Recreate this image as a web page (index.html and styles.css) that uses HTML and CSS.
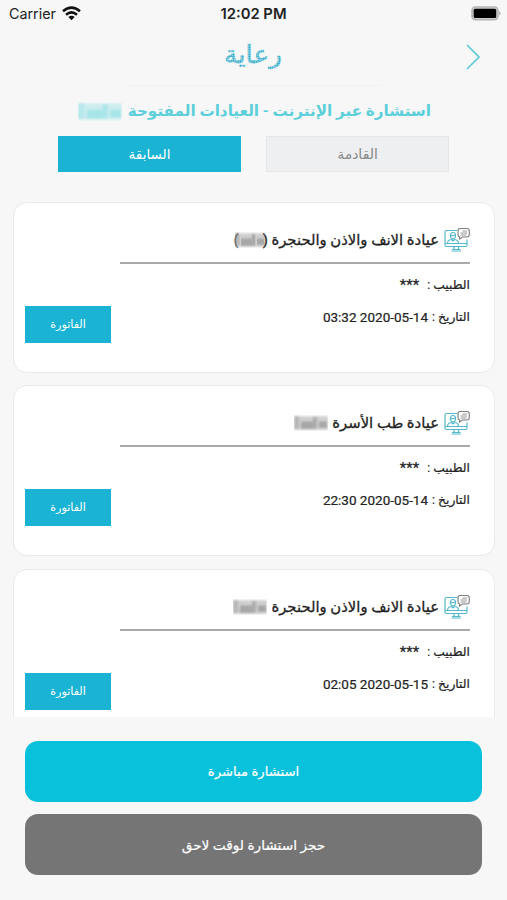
FILE: index.html
```html
<!DOCTYPE html>
<html lang="ar" dir="rtl">
<head>
    <meta charset="UTF-8">
    <meta name="viewport" content="width=device-width, initial-scale=1.0">
    <title>رعاية</title>
    <link rel="stylesheet" href="styles.css">
</head>
<body>
    <svg width="0" height="0" class="defs">
        <defs>
            <pattern id="dots" width="2.3" height="2.3" patternUnits="userSpaceOnUse">
                <circle cx="1.15" cy="1.15" r="1.1" fill="#35aecb"/>
            </pattern>
            <filter id="soft"><feGaussianBlur stdDeviation="0.8"/></filter>
            <symbol id="consult" viewBox="0 0 26 26">
                <g fill="none" stroke="#55b9cb" stroke-width="1.2">
                    <path d="M13 3.500H2.500Q1 3.500 1 5V18Q1 19.500 2.500 19.500H21.500Q23 19.500 23 18V12.500"/>
                    <path d="M1 16.500H23M10 19.500V23M14.500 19.500V23M7.500 24H17M8 22.500H16.500"/>
                    <path d="M6.500 9.500Q6 5.500 9 5.500Q12 5.500 11.500 9.500Q11 12 9 12Q7 12 6.500 9.500ZM6.500 8.500Q9 9 11.500 8M3.500 16.500Q3.500 12.800 7.500 12.500L9 14L10.500 12.500Q14.500 12.800 14.500 16.500"/>
                </g>
                <g fill="none" stroke="#7d7d80" stroke-width="1.1">
                    <path d="M16 1.500H23Q25.300 1.500 25.300 4V7.500Q25.300 10 23 10H18.500L15.500 12V10Q14 9.500 14 7.500V4Q14 1.500 16 1.500Z"/>
                    <path d="M18.500 4H23M16.500 6H23M16.500 8H22.500" stroke-width=".8"/>
                </g>
            </symbol>
            <symbol id="mosaic" viewBox="0 0 34 15" preserveAspectRatio="none">
                <g filter="url(#soft)">
                    <rect x="0" y="1" width="34" height="13" fill="currentColor" opacity=".3"/>
                    <rect x="0" y="1" width="5" height="12" fill="currentColor" opacity=".25"/>
                    <rect x="7" y="6" width="12" height="7" fill="currentColor" opacity=".4"/>
                    <rect x="19" y="2" width="4" height="11" fill="currentColor" opacity=".35"/>
                    <rect x="25" y="6" width="8" height="6" fill="currentColor" opacity=".4"/>
                </g>
            </symbol>
        </defs>
    </svg>

    <div class="status-bar" dir="ltr">
        <div class="carrier">
            <span>Carrier</span>
            <svg width="19" height="15" viewBox="0 0 19 15">
                <g fill="none" stroke="#111" stroke-width="2.500">
                    <path d="M1 5.300Q9.500 -2 18 5.300"/>
                    <path d="M4 8.700Q9.500 4 15 8.700"/>
                </g>
                <path d="M6.300 10.900Q9.500 8.400 12.700 10.900L9.500 14.300Z" fill="#111"/>
            </svg>
        </div>
        <div class="clock">12:02 PM</div>
        <div class="battery">
            <svg width="31" height="15" viewBox="0 0 31 15">
                <rect x="1" y="1" width="26" height="12.800" rx="3.500" fill="#ccc" stroke="#b5b5b5" stroke-width="1.600"/>
                <rect x="2.700" y="2.700" width="22.500" height="9.400" rx="1.500" fill="#000"/>
                <path d="M28.200 5Q31 7.300 28.200 9.600Z" fill="#aaa"/>
            </svg>
        </div>
    </div>

    <header class="header">
        <svg class="logo" width="64" height="40" viewBox="0 0 64 40" direction="rtl">
            <text x="61" y="26" textLength="58" lengthAdjust="spacingAndGlyphs" fill="url(#dots)" stroke="url(#dots)" stroke-width=".5">رعاية</text>
        </svg>
        <svg class="next" width="16" height="28" viewBox="0 0 16 28">
            <path d="M2 2L14 14L2 26" fill="none" stroke="#5ec9d8" stroke-width="1.700"/>
        </svg>
    </header>

    <h1 class="page-title">
        <span class="title-text">استشارة عبر الإنترنت - العيادات المفتوحة</span>
        <svg class="title-hidden"><use href="#mosaic"/></svg>
    </h1>

    <div class="tabs">
        <button class="tab">القادمة</button>
        <button class="tab active">السابقة</button>
    </div>

    <main class="list">
        <div class="card">
            <div class="info">
                <div class="clinic">
                    <svg class="icon"><use href="#consult"/></svg>
                    <span class="name">عيادة الانف والاذن والحنجرة (</span>
                    <svg class="hidden-word in-parens"><use href="#mosaic"/></svg>
                    <span class="paren">)</span>
                </div>
                <div class="row doctor"><span>الطبيب :</span> <span>***</span></div>
                <div class="row date"><span>التاريخ :</span> <span dir="ltr">03:32 2020-05-14</span></div>
            </div>
            <button class="invoice">الفاتورة</button>
        </div>
        <div class="card">
            <div class="info">
                <div class="clinic">
                    <svg class="icon"><use href="#consult"/></svg>
                    <span class="name">عيادة طب الأسرة</span>
                    <svg class="hidden-word"><use href="#mosaic"/></svg>
                </div>
                <div class="row doctor"><span>الطبيب :</span> <span>***</span></div>
                <div class="row date"><span>التاريخ :</span> <span dir="ltr">22:30 2020-05-14</span></div>
            </div>
            <button class="invoice">الفاتورة</button>
        </div>
        <div class="card">
            <div class="info">
                <div class="clinic">
                    <svg class="icon"><use href="#consult"/></svg>
                    <span class="name">عيادة الانف والاذن والحنجرة</span>
                    <svg class="hidden-word"><use href="#mosaic"/></svg>
                </div>
                <div class="row doctor"><span>الطبيب :</span> <span>***</span></div>
                <div class="row date"><span>التاريخ :</span> <span dir="ltr">02:05 2020-05-15</span></div>
            </div>
            <button class="invoice">الفاتورة</button>
        </div>
    </main>

    <footer class="actions">
        <button class="action live">استشارة مباشرة</button>
        <button class="action later">حجز استشارة لوقت لاحق</button>
    </footer>
</body>
</html>
```

FILE: styles.css
```css
* {
    box-sizing: border-box;
}

body {
    margin: 0;
    height: 900px;
    display: flex;
    flex-direction: column;
    overflow: hidden;
    background-color: #f7f7f7;
    color: #222;
    font-family: Roboto, "DejaVu Sans", sans-serif;
}

.defs {
    position: absolute;
}

button {
    border: 0;
    padding: 0;
    font-family: inherit;
    cursor: pointer;
}

.status-bar {
    height: 27px;
    padding: 0 5px 0 9px;
    display: grid;
    grid-template-columns: 1fr auto 1fr;
    align-items: center;
    font-family: Inter, sans-serif;
    font-size: 14.300px;
    color: #222;
}

.carrier {
    display: flex;
    align-items: center;
    gap: 6px;
}

.clock {
    padding-right: 4px;
    font-weight: 600;
    font-size: 14.800px;
}

.battery {
    display: flex;
    justify-content: flex-end;
}

.header {
    height: 59px;
    display: grid;
    grid-template-columns: 1fr auto 1fr;
    align-items: center;
    padding: 0 26px 0 25px;
    background: linear-gradient(#f1f1f1, #f1f1f1) center bottom / 252px 1px no-repeat;
}

.logo {
    grid-column: 2;
    font-family: "DejaVu Sans", sans-serif;
    font-size: 25px;
}

.next {
    grid-row: 1;
    grid-column: 1;
}

.page-title {
    height: 50px;
    margin: 0;
    padding-right: 76px;
    display: flex;
    align-items: center;
    gap: 6px;
    font-size: 15.200px;
    color: #5ccfda;
    white-space: nowrap;
}

.title-hidden {
    width: 44px;
    height: 19px;
    color: #6ed6df;
}

.tabs {
    display: flex;
    gap: 25px;
    padding: 0 58px;
}

.tab {
    flex: 1;
    height: 36px;
    background-color: #edeff0;
    border: 1px solid #e6e7e8;
    font-size: 14px;
    color: #888;
}

.tab.active {
    background-color: #1ab3d3;
    border-color: #1ab3d3;
    font-size: 13.500px;
    color: #fff;
}

.list {
    height: 515px;
    margin-top: 30px;
    padding: 0 12px 0 13px;
    overflow: hidden;
}

.card {
    height: 171px;
    margin-bottom: 12.300px;
    padding: 15px 24px 0 11px;
    display: flex;
    justify-content: space-between;
    background-color: #fff;
    border: 1px solid #e9e9e9;
    border-radius: 14px;
}

.info {
    width: 350px;
}

.clinic {
    height: 46px;
    display: flex;
    align-items: center;
    border-bottom: 2px solid #aaa;
    white-space: nowrap;
}

.icon {
    width: 26px;
    height: 26px;
}

.name {
    margin-right: 5px;
    font-size: 14.800px;
    -webkit-text-stroke: 0.3px #222;
}

.hidden-word {
    width: 34px;
    height: 16px;
    margin-right: 4px;
    color: #666;
}

.hidden-word.in-parens {
    width: 30px;
    margin-right: -2px;
}

.paren {
    margin-right: -4px;
    font-size: 14.800px;
    color: #666;
}

.row {
    display: flex;
    height: 32px;
    align-items: center;
    font-size: 12.300px;
    -webkit-text-stroke: 0.2px #222;
}

.doctor {
    margin-top: 5px;
    gap: 8px;
}

.date {
    gap: 4px;
}

.row span:last-child {
    font-size: 13.500px;
}

.doctor span:last-child {
    font-size: 15px;
}

.invoice {
    width: 86px;
    height: 37px;
    margin-top: 88px;
    background-color: #1ab3d3;
    font-size: 11.200px;
    color: #fff;
}

.actions {
    display: flex;
    flex-direction: column;
    gap: 12px;
    padding: 24px 25px;
}

.action {
    height: 61px;
    border-radius: 13px;
    font-size: 13.200px;
    color: #fff;
    -webkit-text-stroke: 0.2px #fff;
}

.live {
    background-color: #0ac1dc;
}

.later {
    background-color: #757575;
    font-size: 13.700px;
}
```
